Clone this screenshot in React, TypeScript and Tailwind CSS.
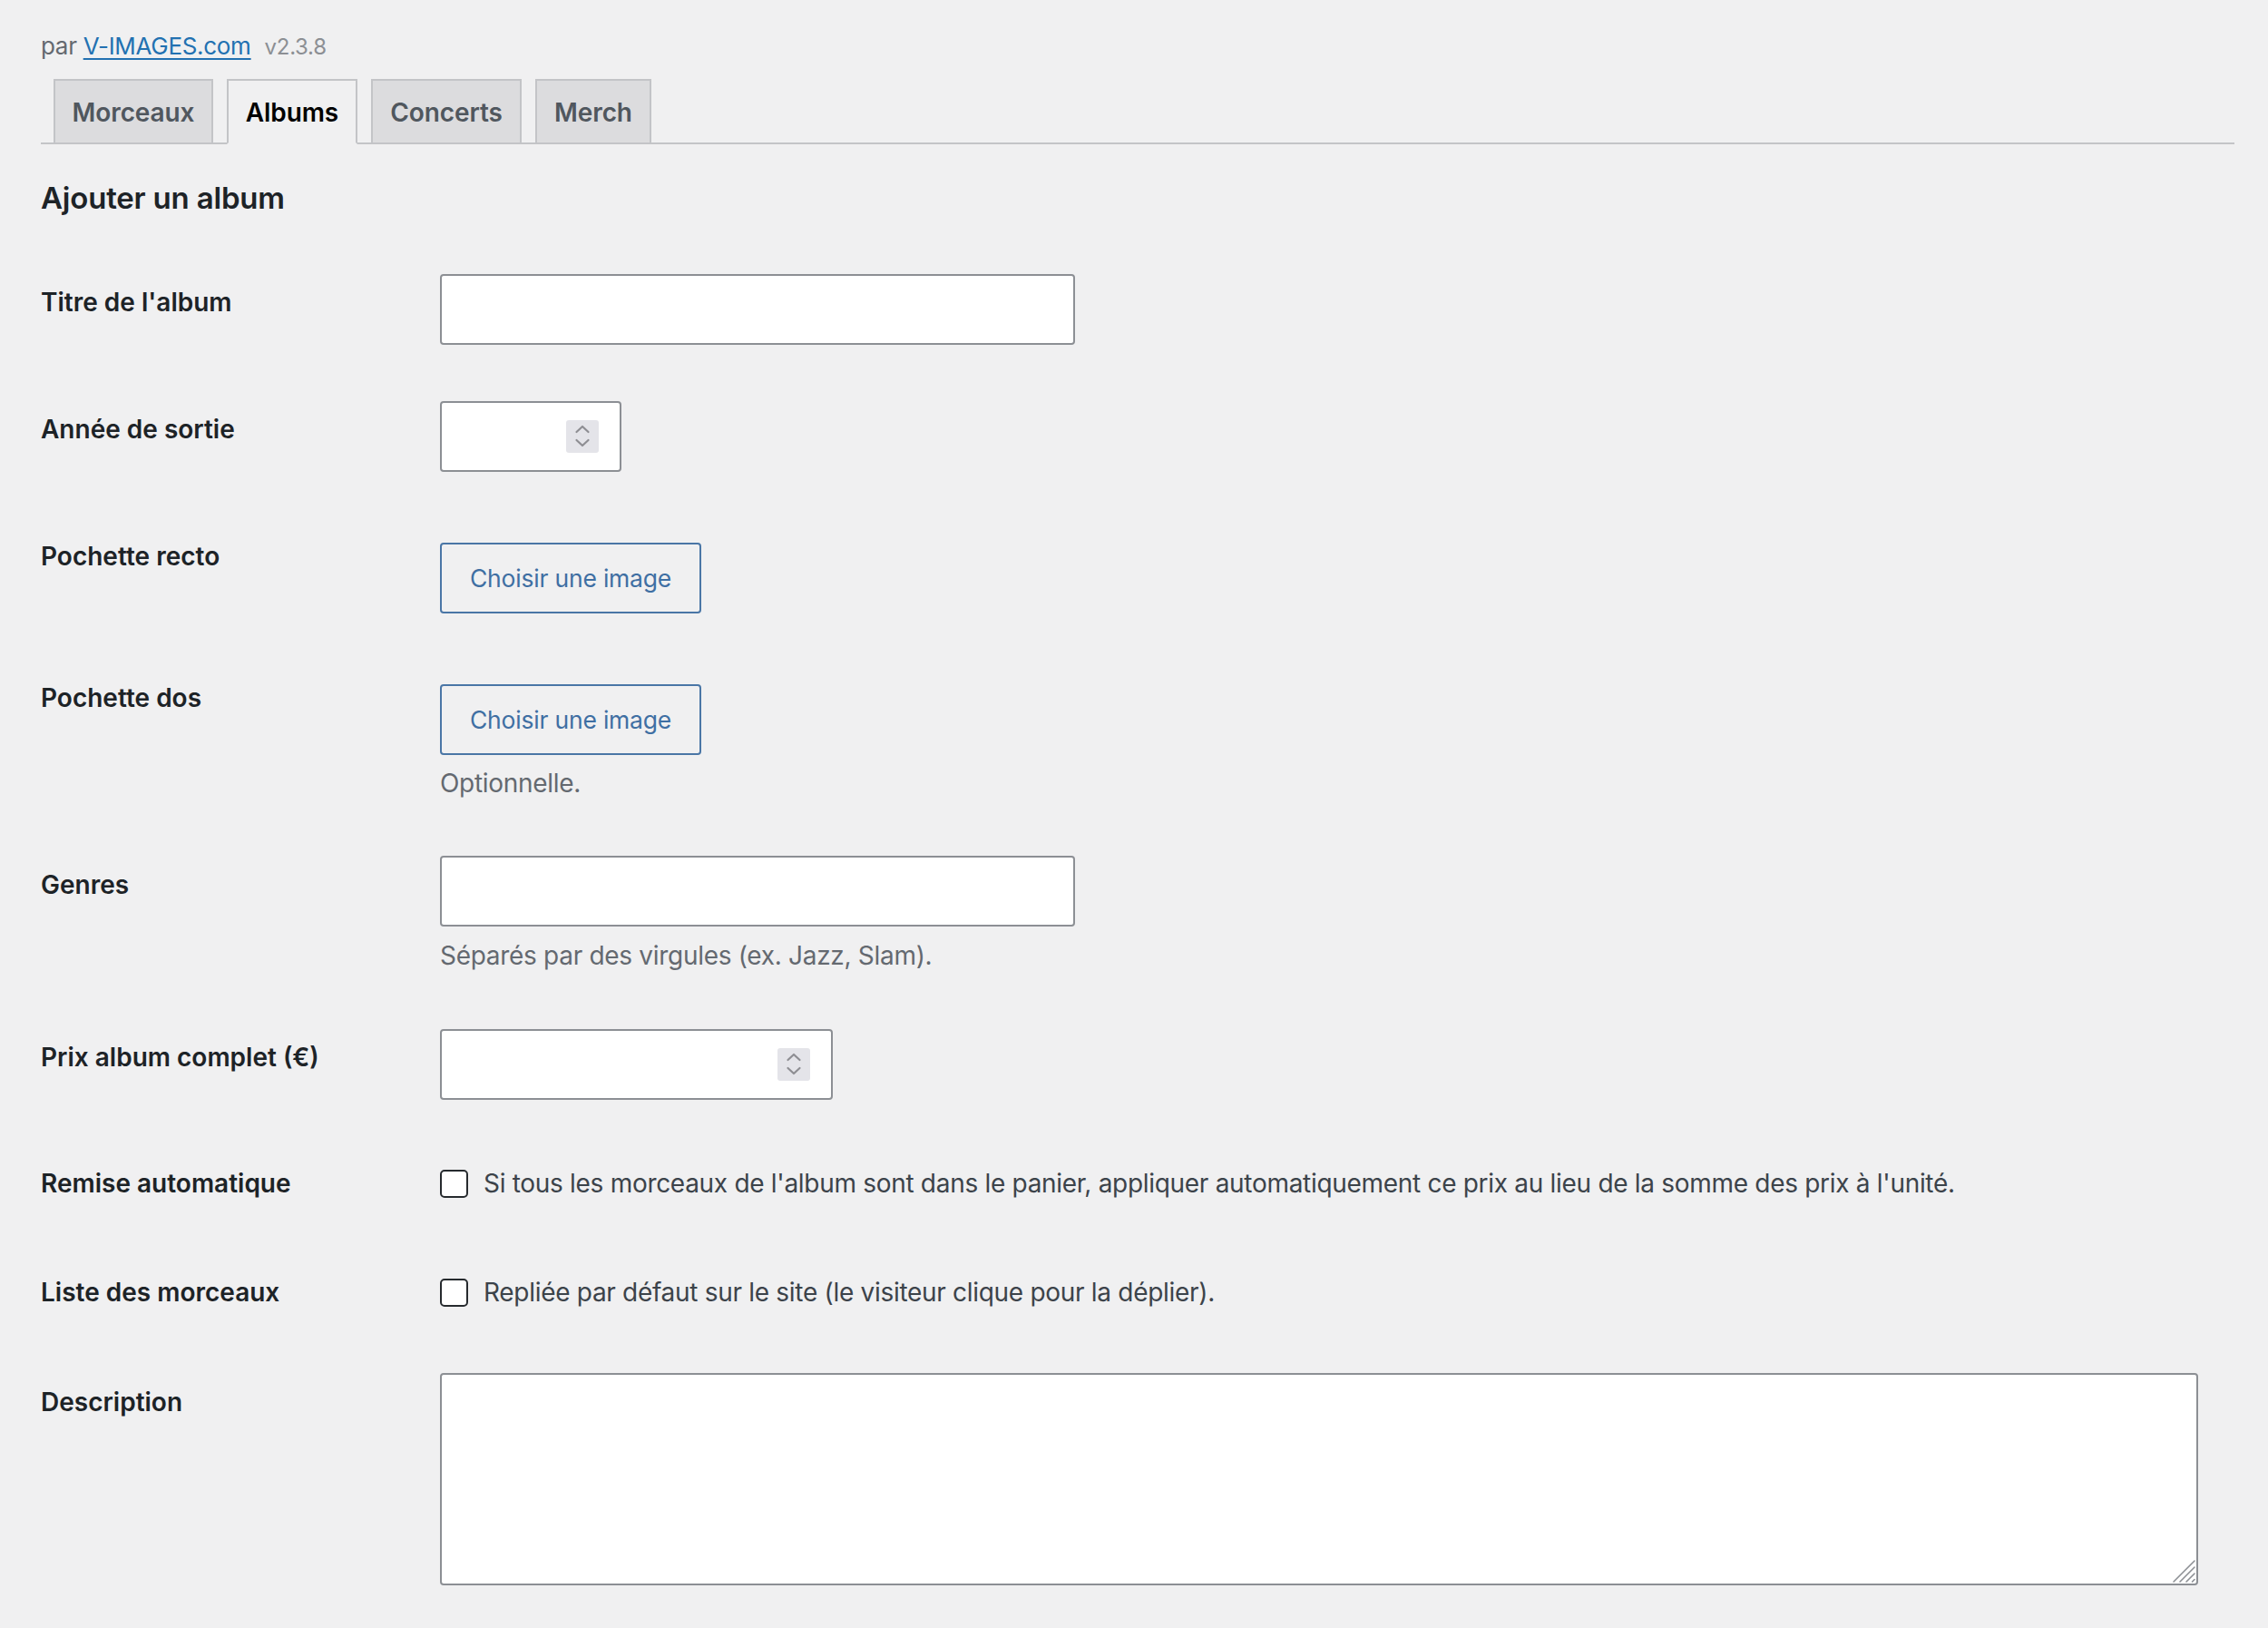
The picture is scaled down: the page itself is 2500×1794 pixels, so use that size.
import React from "react";

const tabs = [
  { label: "Morceaux", w: "w-[176px]", active: false },
  { label: "Albums", w: "w-[144px]", active: true },
  { label: "Concerts", w: "w-[166px]", active: false },
  { label: "Merch", w: "w-[128px]", active: false },
];

function Row({
  label,
  rowClass,
  labelClass,
  fieldClass,
  children,
}: {
  label: string;
  rowClass: string;
  labelClass: string;
  fieldClass: string;
  children: React.ReactNode;
}) {
  return (
    <div className={`flex items-start ${rowClass}`}>
      <div className={`w-[440px] shrink-0 text-[28px] leading-[36px] font-semibold tracking-normal text-[#1d2327] ${labelClass}`}>
        {label}
      </div>
      <div className={`flex flex-col items-start ${fieldClass}`}>{children}</div>
    </div>
  );
}

function Spinner() {
  return (
    <div className="flex h-[36px] w-[36px] items-center justify-center rounded-[3px] bg-[#e4e4e9]">
      <svg width="36" height="36" viewBox="0 0 36 36" fill="none">
        <path d="M11.5 13 L18 7 L24.5 13" stroke="#8e8e93" strokeWidth="2.2" strokeLinecap="round" strokeLinejoin="round" />
        <path d="M11.5 22 L18 28 L24.5 22" stroke="#8e8e93" strokeWidth="2.2" strokeLinecap="round" strokeLinejoin="round" />
      </svg>
    </div>
  );
}

function TextInput({ width }: { width: string }) {
  return (
    <input
      type="text"
      className={`block h-[78px] ${width} rounded-[4px] border-2 border-[#8c8f94] bg-white px-[16px] text-[28px] outline-none`}
    />
  );
}

function NumberInput({ width }: { width: string }) {
  return (
    <div className={`flex h-[78px] ${width} items-center rounded-[4px] border-2 border-[#8c8f94] bg-white pr-[23px]`}>
      <input type="text" className="min-w-0 flex-1 bg-transparent px-[16px] text-[28px] outline-none" />
      <Spinner />
    </div>
  );
}

function MediaButton() {
  return (
    <button className="flex h-[78px] w-[288px] items-center justify-center rounded-[4px] border-2 border-[#4a76a6] bg-[#f0f0f1] text-[26.5px] leading-[36px] tracking-[-0.2px] text-[#3f6fa3]">
      Choisir une image
    </button>
  );
}

function Check({ text }: { text: string }) {
  return (
    <label className="flex h-[36px] items-center text-[28px] leading-[36px] text-[#3c434a]">
      <span className="h-[31px] w-[31px] shrink-0 rounded-[5px] border-2 border-[#262a2e] bg-white" />
      <span className="ml-[17px] whitespace-nowrap">{text}</span>
    </label>
  );
}

export default function App() {
  return (
    <div className="min-h-screen bg-[#f0f0f1] pt-[33px] pl-[45px] pr-[37px] pb-[48px] font-['Inter',sans-serif] tracking-[-0.3px]">
      <p className="text-[26px] leading-[36px] text-[#646970]">
        par{" "}
        <a className="text-[#2271b1] underline decoration-[2px] underline-offset-[4px]" href="#">
          V-IMAGES.com
        </a>
        <span className="ml-[15px] text-[24px] text-[#8c8f94]">v2.3.8</span>
      </p>

      <nav className="mt-[17px] flex gap-[15px] border-b-2 border-[#c3c4c7] pl-[14px]">
        {tabs.map((t) => (
          <div
            key={t.label}
            className={`-mb-[2px] flex h-[72px] ${t.w} items-center justify-center border-2 pt-[2px] text-[28px] leading-[36px] font-semibold tracking-[-0.1px] ${
              t.active
                ? "border-[#c3c4c7] border-b-[#f0f0f1] bg-[#f0f0f1] text-black"
                : "border-[#c3c4c7] bg-[#dcdcde] text-[#50575e]"
            }`}
          >
            {t.label}
          </div>
        ))}
      </nav>

      <h2 className="mt-[39px] text-[33px] leading-[40px] font-semibold tracking-[-0.2px] text-[#1d2327]">Ajouter un album</h2>

      <Row label="Titre de l'album" rowClass="mt-[64px]" labelClass="pt-[13px]" fieldClass="">
        <TextInput width="w-[700px]" />
      </Row>

      <Row label="Année de sortie" rowClass="mt-[62px]" labelClass="pt-[13px]" fieldClass="">
        <NumberInput width="w-[200px]" />
      </Row>

      <Row label="Pochette recto" rowClass="mt-[75px]" labelClass="" fieldClass="pt-[3px]">
        <MediaButton />
      </Row>

      <Row label="Pochette dos" rowClass="mt-[75px]" labelClass="" fieldClass="pt-[3px]">
        <MediaButton />
        <p className="mt-[13px] text-[28px] leading-[36px] text-[#646970]">Optionnelle.</p>
      </Row>

      <Row label="Genres" rowClass="mt-[62px]" labelClass="pt-[14px]" fieldClass="">
        <TextInput width="w-[700px]" />
        <p className="mt-[14px] text-[28px] leading-[36px] text-[#646970]">Séparés par des virgules (ex. Jazz, Slam).</p>
      </Row>

      <Row label="Prix album complet (€)" rowClass="mt-[63px]" labelClass="pt-[13px]" fieldClass="">
        <NumberInput width="w-[433px]" />
      </Row>

      <Row label="Remise automatique" rowClass="mt-[74px]" labelClass="" fieldClass="">
        <Check text="Si tous les morceaux de l'album sont dans le panier, appliquer automatiquement ce prix au lieu de la somme des prix à l'unité." />
      </Row>

      <Row label="Liste des morceaux" rowClass="mt-[84px]" labelClass="" fieldClass="">
        <Check text="Repliée par défaut sur le site (le visiteur clique pour la déplier)." />
      </Row>

      <Row label="Description" rowClass="mt-[71px]" labelClass="pt-[14px]" fieldClass="">
        <div className="relative">
          <textarea className="block h-[234px] w-[1938px] resize-none rounded-[4px] border-2 border-[#8c8f94] bg-white px-[16px] py-[8px] text-[28px] outline-none" />
          <svg className="pointer-events-none absolute right-0 bottom-0" width="30" height="30" viewBox="0 0 30 30" fill="none">
            <path d="M3 26 L26 3 M10 26 L26 10 M17 26 L26 17 M23.5 26 L26 23.5" stroke="#8c8f94" strokeWidth="1.6" strokeLinecap="round" />
          </svg>
        </div>
      </Row>
    </div>
  );
}
